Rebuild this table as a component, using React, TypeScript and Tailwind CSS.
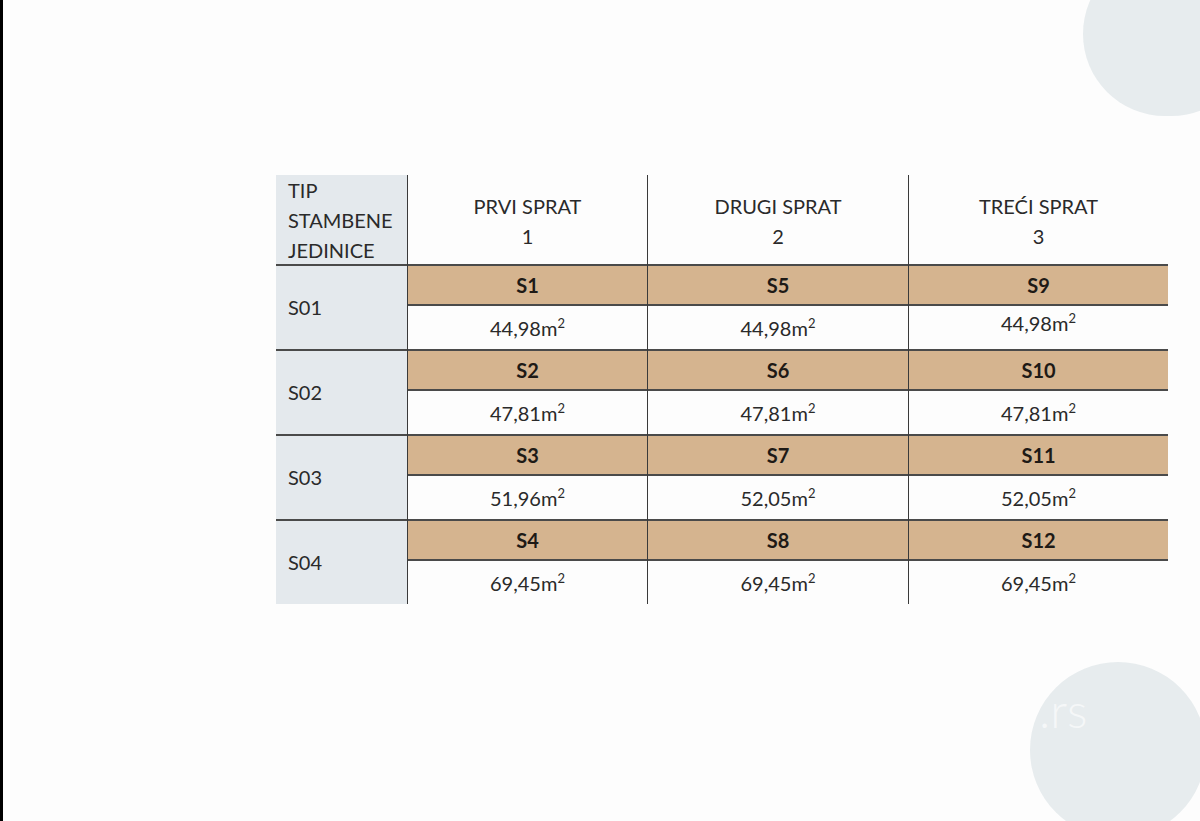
import React from 'react';

type Row = { type: string; units: { code: string; area: string }[] };

const rows: Row[] = [
  { type: 'S01', units: [{ code: 'S1', area: '44,98' }, { code: 'S5', area: '44,98' }, { code: 'S9', area: '44,98' }] },
  { type: 'S02', units: [{ code: 'S2', area: '47,81' }, { code: 'S6', area: '47,81' }, { code: 'S10', area: '47,81' }] },
  { type: 'S03', units: [{ code: 'S3', area: '51,96' }, { code: 'S7', area: '52,05' }, { code: 'S11', area: '52,05' }] },
  { type: 'S04', units: [{ code: 'S4', area: '69,45' }, { code: 'S8', area: '69,45' }, { code: 'S12', area: '69,45' }] },
];

const floors = [
  { name: 'PRVI SPRAT', n: '1' },
  { name: 'DRUGI SPRAT', n: '2' },
  { name: 'TREĆI SPRAT', n: '3' },
];

export default function App() {
  return (
    <div
      className="relative w-[1200px] h-[821px] overflow-hidden bg-[#fdfdfd] border-l-[3px] border-black"
      style={{ fontFamily: 'Lato, "Open Sans", sans-serif' }}
    >
      {/* decorative circles */}
      <div className="absolute left-[1080px] top-[-48px] w-[170px] h-[164px] rounded-full bg-[#e7ecee]" />
      <div className="absolute left-[1027px] top-[662px] w-[176px] h-[176px] rounded-full bg-[#e7ecee]" />
      <div className="absolute left-[1036px] top-[686px] text-[48px] font-light text-white/60 leading-none">.rs</div>

      <div className="pt-[175px] pl-[273px]">
        <div className="grid grid-cols-[131px_240px_261px_260px] text-[20px] text-[#2a2a2a]">
          {/* header */}
          <div className="h-[89px] bg-[#e4e9ed] pl-[12px] leading-[30px]">
            TIP<br />STAMBENE<br />JEDINICE
          </div>
          {floors.map((f) => (
            <div key={f.n} className="h-[89px] border-l border-[#3a3a3a] flex flex-col items-center justify-center leading-[30px] pt-[2px]">
              <span>{f.name}</span>
              <span>{f.n}</span>
            </div>
          ))}

          {rows.map((r) => (
            <React.Fragment key={r.type}>
              <div className="h-[85px] bg-[#e4e9ed] border-t-2 border-[#4a4a4a] flex items-center pl-[12px] pb-[2px]">
                {r.type}
              </div>
              {r.units.map((u) => (
                <div key={u.code} className="h-[85px] border-l border-[#3a3a3a] flex flex-col">
                  <div className="h-[42px] bg-[#d5b48f] border-t-2 border-b-2 border-[#4a4a4a] flex items-center justify-center font-bold text-[#1e1a16]">
                    {u.code}
                  </div>
                  <div className={u.code === 'S9' ? 'flex-1 flex justify-center pt-[2px]' : 'flex-1 flex items-center justify-center'}>
                    <span>
                      {u.area}m<sup className="text-[13px] top-[-8px]">2</sup>
                    </span>
                  </div>
                </div>
              ))}
            </React.Fragment>
          ))}
        </div>
      </div>
    </div>
  );
}
